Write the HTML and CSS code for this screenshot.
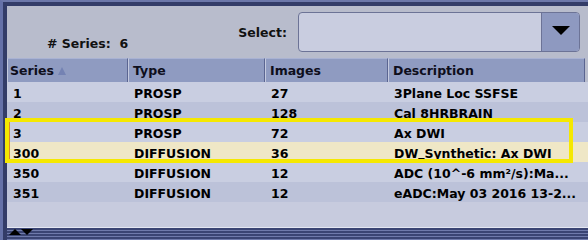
FILE: index.html
```html
<!DOCTYPE html>
<html lang="en">
<head>
    <meta charset="UTF-8">
    <link rel="stylesheet" href="styles.css">
    <title>Series List</title>
</head>
<body>
    <div class="frame">
        <!-- top bar: count + select box -->
        <div class="toolbar">
            <div class="count"># Series:&nbsp; 6</div>
            <div class="select-label">Select:</div>
            <div class="combo">
                <div class="combo-btn"><span class="arrow-down"></span></div>
            </div>
        </div>

        <!-- series table -->
        <div class="table">
            <div class="row head">
                <div class="cell first">Series <span class="sort-up"></span></div>
                <div class="cell">Type</div>
                <div class="cell">Images</div>
                <div class="cell">Description</div>
            </div>
            <div class="row">
                <div class="cell">1</div>
                <div class="cell">PROSP</div>
                <div class="cell">27</div>
                <div class="cell">3Plane Loc SSFSE</div>
            </div>
            <div class="row alt">
                <div class="cell">2</div>
                <div class="cell">PROSP</div>
                <div class="cell">128</div>
                <div class="cell">Cal 8HRBRAIN</div>
            </div>
            <div class="row">
                <div class="cell">3</div>
                <div class="cell">PROSP</div>
                <div class="cell">72</div>
                <div class="cell">Ax DWI</div>
            </div>
            <div class="row selected">
                <div class="cell">300</div>
                <div class="cell">DIFFUSION</div>
                <div class="cell">36</div>
                <div class="cell">DW<span class="us">_</span>Synthetic: Ax DWI</div>
            </div>
            <div class="row">
                <div class="cell">350</div>
                <div class="cell">DIFFUSION</div>
                <div class="cell">12</div>
                <div class="cell">ADC (10^-6 mm²/s):Ma...</div>
            </div>
            <div class="row alt">
                <div class="cell">351</div>
                <div class="cell">DIFFUSION</div>
                <div class="cell">12</div>
                <div class="cell">eADC:May 03 2016 13-2...</div>
            </div>
            <div class="empty"></div>

            <!-- highlight box over rows 3 and 300 -->
            <div class="mark"></div>
        </div>

        <!-- bottom splitter strip -->
        <div class="strip">
            <span class="tri-up"></span><span class="tri-down"></span>
        </div>
    </div>
</body>
</html>
```

FILE: styles.css
```css
body {
    margin: 0;
    padding: 0;
    background-color: #3a4470;
    font-family: "DejaVu Sans", Verdana, sans-serif;
    font-weight: bold;
    font-size: 12.5px;
    color: #000;
}

.frame {
    width: 588px;
    height: 240px;
    border-top: 2px solid #6c77a9;
    border-left: 3px solid #6571a8;
    box-sizing: border-box;
    background-color: #333c68;
    padding: 4px 0 0 4px;
    position: relative;
}

/* top area */
.toolbar {
    display: flex;
    align-items: flex-start;
    height: 52px;
    box-sizing: border-box;
    padding: 6px 8px 0 40px;
    background-color: #b8bccc;
    color: #111;
}

.count {
    flex: 1;
    margin-top: 24px;
    line-height: 16px;
}

.select-label {
    margin-top: 13px;
    margin-right: 11px;
    line-height: 16px;
}

.combo {
    width: 282px;
    height: 40px;
    box-sizing: border-box;
    border: 1px solid #6c7396;
    border-radius: 4px;
    background-color: #c9cde0;
    display: flex;
    justify-content: flex-end;
    overflow: hidden;
}

.combo-btn {
    width: 37px;
    background-color: #8e99c0;
    border-left: 1px solid #6c7396;
    display: flex;
    align-items: center;
    justify-content: center;
}

.arrow-down {
    width: 0;
    height: 0;
    border-left: 9.5px solid transparent;
    border-right: 9.5px solid transparent;
    border-top: 9px solid #000;
    margin-top: -3px;
}

/* table */
.table {
    position: relative;
    background-color: #c7cbde;
}

.row {
    display: grid;
    grid-template-columns: 121px 137px 123px 1fr;
    height: 20px;
    line-height: 23px;
    background-color: #c9cee1;
}

.row.alt {
    background-color: #bcc2d9;
}

.row.selected {
    background-color: #efe7c6;
}

.cell {
    padding-left: 6px;
    white-space: nowrap;
}

.us {
    position: relative;
    top: -2px;
}

.row.head {
    height: 24px;
    background-color: #b8bccc;
    grid-template-columns: 121px 137px 123px 197px;
    color: #0e0e1c;
}

.row.head .cell {
    background-color: #8f9bc1;
    border-left: 1px solid #c4cadf;
    border-right: 1px solid #5b6591;
    border-top: 1px solid #a9b2d3;
    padding-left: 4px;
    line-height: 23px;
    overflow: hidden;
}

.row.head .cell.first {
    padding-left: 2px;
}

.sort-up {
    display: inline-block;
    width: 0;
    height: 0;
    border-left: 4.5px solid transparent;
    border-right: 4.5px solid transparent;
    border-bottom: 8px solid #7482b3;
}

.empty {
    height: 25px;
    border-bottom: 1px solid #e4e7f2;
}

.mark {
    position: absolute;
    left: -2px;
    top: 60px;
    width: 568px;
    height: 45px;
    box-sizing: border-box;
    border: 4px solid #f5e800;
}

.mark::before {
    content: "";
    position: absolute;
    left: 0;
    top: 0;
    bottom: 0;
    width: 1px;
    background-color: #d98a2c;
}

/* bottom strip */
.strip {
    height: 12px;
    display: flex;
    align-items: flex-start;
    padding-left: 2px;
    background: repeating-linear-gradient(to bottom, #3a4473 0, #3a4473 2px, #6f7aab 2px, #6f7aab 3px);
}

.tri-up {
    width: 0;
    height: 0;
    border-left: 6px solid transparent;
    border-right: 6px solid transparent;
    border-bottom: 6px solid #000;
    margin-top: 1px;
}

.tri-down {
    width: 0;
    height: 0;
    border-left: 6.5px solid transparent;
    border-right: 6.5px solid transparent;
    border-top: 6px solid #000;
    margin-top: 1px;
}
```
